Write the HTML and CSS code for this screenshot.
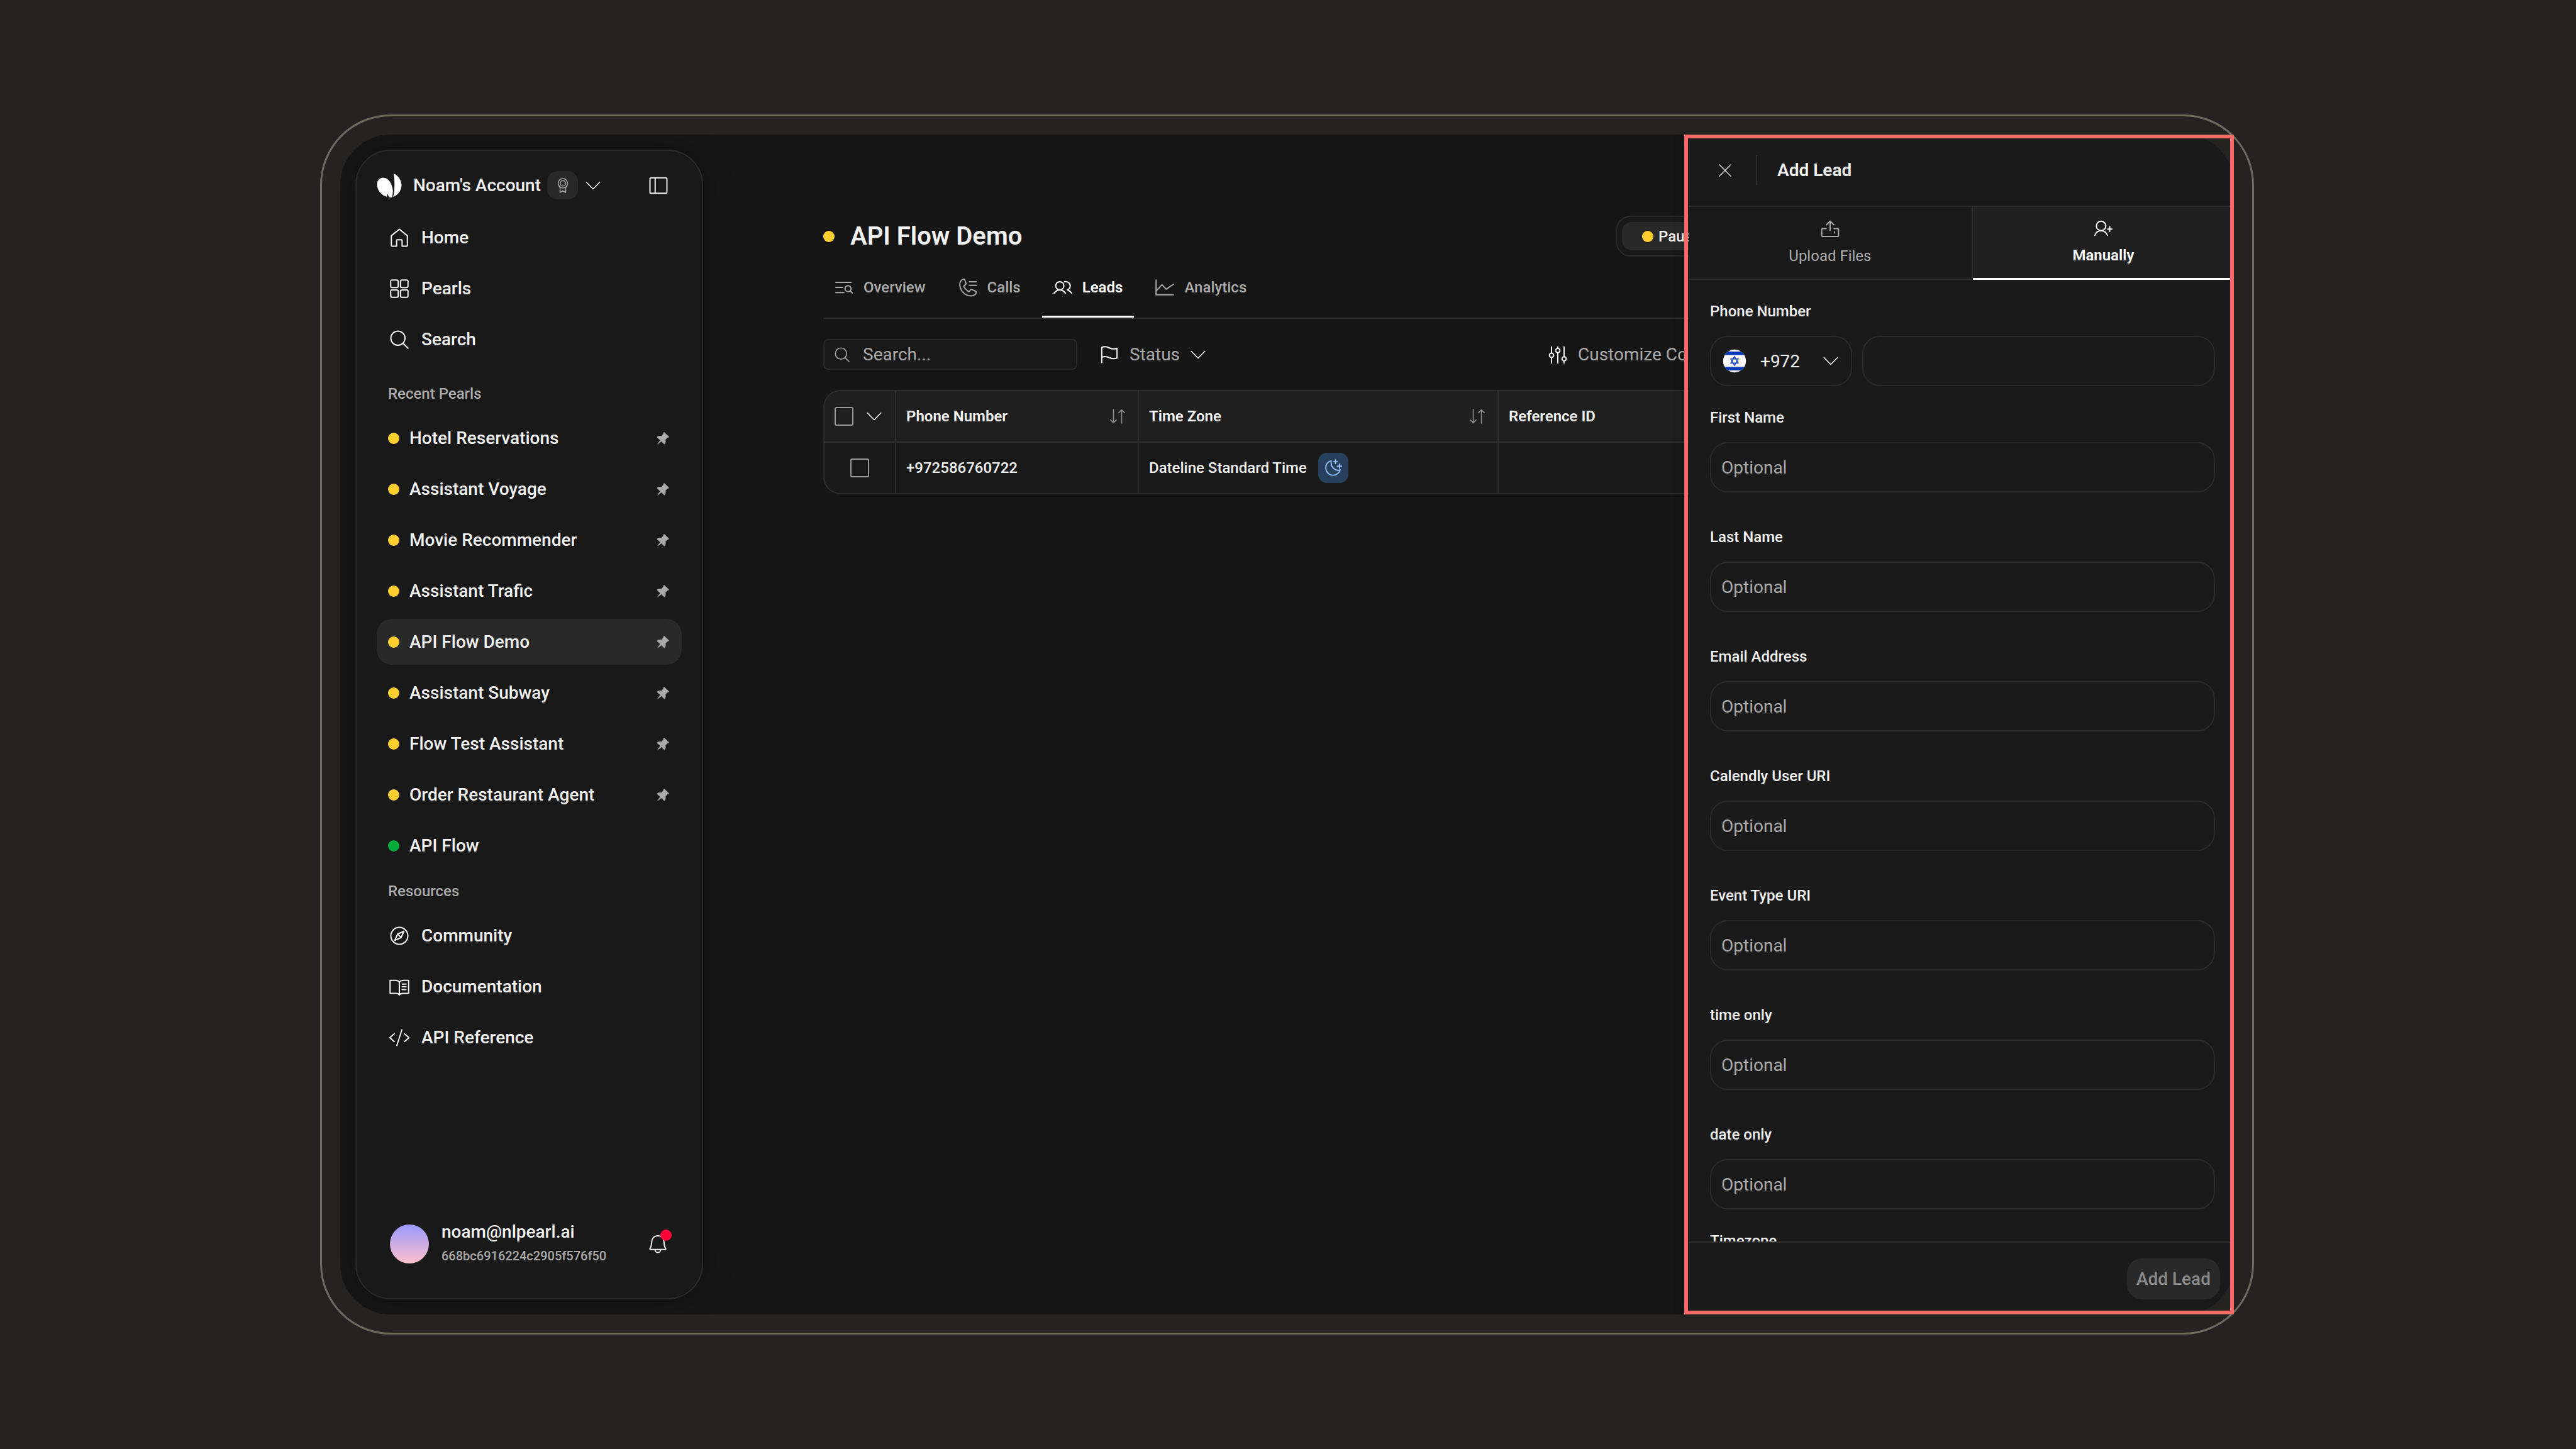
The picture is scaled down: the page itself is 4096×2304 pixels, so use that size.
FILE: index.html
```html
<!DOCTYPE html>
<html lang="en">
<head>
    <meta charset="UTF-8">
    <meta name="viewport" content="width=device-width, initial-scale=1.0">
    <title>API Flow Demo - Leads</title>
    <link rel="stylesheet" href="styles.css">
</head>
<body>

    <!-- Shared icons -->
    <svg class="sprite" aria-hidden="true">
        <symbol id="chevron" viewBox="0 0 24 24"><path d="M1.2 6.5 12 17.5 22.8 6.5"/></symbol>
        <symbol id="magnifier" viewBox="0 0 24 24"><circle cx="10.2" cy="10.2" r="9"/><path d="m16.6 16.6 6.4 6.4"/></symbol>
        <symbol id="pin" viewBox="0 0 20 20"><path d="M12.6.6 19.3 7c.6.7.4 1.5-.5 1.7l-1.6.4-3 3.2c.6 2.2.4 4.6-1 6.7-.4.5-1 .6-1.5.1L7.6 15l-5.5 4.3c-.6.4-1-.1-.6-.6L5.600 13 .9 8.800c-.5-.5-.4-1.200.2-1.600 2-1.200 4.200-1.400 6.400-.8L10.500 3l.4-1.900c.2-.9 1-1.200 1.700-.5z"/></symbol>
        <symbol id="sort" viewBox="0 0 24 24"><path d="M5.500 1v21M.9 17.600 5.500 22.400 10.100 17.600M18.500 23V2M13.900 6.400 18.500 1.600 23.100 6.400"/></symbol>
    </svg>

    <div class="frame">
        <div class="screen">

            <!-- Sidebar -->
            <aside class="sidebar">
                <div class="account">
                    <svg class="logo" viewBox="40 73 152 147"><path d="M80 99C108 99 134 130 138 180L134 216C128 219 119 219 113 217L106 196 101 214C72 208 42 178 42 140 42 115 58 99 80 99ZM142 74C170 85 190 115 190 145 190 175 170 205 140 215 149 175 150 120 142 74Z"/></svg>
                    <button class="account-switch">
                        <span>Noam's Account</span>
                        <span class="badge">
                            <svg class="icon icon-medal" viewBox="0 0 24 24"><circle cx="12" cy="8.500" r="7.500"/><circle cx="12" cy="8.500" r="4.300"/><path d="M7.500 15v8l4.500-2.500 4.500 2.500v-8"/></svg>
                        </span>
                        <svg class="icon icon-sm"><use href="#chevron"/></svg>
                    </button>
                    <button class="collapse" aria-label="Collapse sidebar">
                        <svg class="icon" viewBox="0 0 24 24"><rect x="1.200" y="2.200" width="21.600" height="19.600" rx="1.500"/><path d="M7.800 2.200v19.600"/></svg>
                    </button>
                </div>

                <nav class="nav">
                    <a class="nav-item" href="#home">
                        <svg class="icon" viewBox="0 0 24 24"><path d="M1.800 9.500 12 1.200l10.200 8.300v12.300a1 1 0 0 1-1 1h-5.700v-7.300a1 1 0 0 0-1-1h-5a1 1 0 0 0-1 1v7.300H2.800a1 1 0 0 1-1-1z"/></svg>
                        Home
                    </a>
                    <a class="nav-item" href="#pearls">
                        <svg class="icon" viewBox="0 0 24 24"><rect x="1" y="1" width="9.500" height="9.500" rx="1.800"/><rect x="13.500" y="1" width="9.500" height="9.500" rx="1.800"/><rect x="1" y="13.500" width="9.500" height="9.500" rx="1.800"/><rect x="13.500" y="13.500" width="9.500" height="9.500" rx="1.800"/></svg>
                        Pearls
                    </a>
                    <a class="nav-item" href="#search">
                        <svg class="icon"><use href="#magnifier"/></svg>
                        Search
                    </a>
                </nav>

                <h2 class="nav-title">Recent Pearls</h2>
                <nav class="nav">
                    <a class="pearl" href="#p1"><span class="dot"></span>Hotel Reservations<svg class="pin"><use href="#pin"/></svg></a>
                    <a class="pearl" href="#p2"><span class="dot"></span>Assistant Voyage<svg class="pin"><use href="#pin"/></svg></a>
                    <a class="pearl" href="#p3"><span class="dot"></span>Movie Recommender<svg class="pin"><use href="#pin"/></svg></a>
                    <a class="pearl" href="#p4"><span class="dot"></span>Assistant Trafic<svg class="pin"><use href="#pin"/></svg></a>
                    <a class="pearl active" href="#p5"><span class="dot"></span>API Flow Demo<svg class="pin"><use href="#pin"/></svg></a>
                    <a class="pearl" href="#p6"><span class="dot"></span>Assistant Subway<svg class="pin"><use href="#pin"/></svg></a>
                    <a class="pearl" href="#p7"><span class="dot"></span>Flow Test Assistant<svg class="pin"><use href="#pin"/></svg></a>
                    <a class="pearl" href="#p8"><span class="dot"></span>Order Restaurant Agent<svg class="pin"><use href="#pin"/></svg></a>
                    <a class="pearl" href="#p9"><span class="dot green"></span>API Flow</a>
                </nav>

                <h2 class="nav-title resources">Resources</h2>
                <nav class="nav">
                    <a class="nav-item" href="#community">
                        <svg class="icon" viewBox="0 0 24 24"><circle cx="12" cy="12" r="10.800"/><path d="M17.800 6.200 9.800 9.800 6.200 17.800 14.200 14.200z"/><path d="m9.800 9.800 4.400 4.400"/></svg>
                        Community
                    </a>
                    <a class="nav-item" href="#docs">
                        <svg class="icon icon-wide" viewBox="0 0 26 24"><path d="M13 6c-1.500-1.700-3-2.200-5-2.200H1.200v16.600H9c2 0 3.300.6 4 2.200.7-1.600 2-2.200 4-2.200h7.800V3.800H18c-2 0-3.500.5-5 2.200zM13 6v16.500M16.500 8.500h5M16.500 12h5M16.500 15.500h5"/></svg>
                        Documentation
                    </a>
                    <a class="nav-item" href="#api">
                        <svg class="icon icon-wide" viewBox="0 0 26 24"><path d="M6.500 7 .8 12l5.700 5M19.500 7l5.700 5-5.700 5M16.200 2 9.800 22"/></svg>
                        API Reference
                    </a>
                </nav>

                <div class="user">
                    <span class="avatar"></span>
                    <div class="user-text">
                        <div class="user-mail">noam@nlpearl.ai</div>
                        <div class="user-id">668bc6916224c2905f576f50</div>
                    </div>
                    <button class="bell" aria-label="Notifications">
                        <svg class="icon" viewBox="0 0 24 24"><path d="M12 1.500c-4.600 0-7.600 3.200-7.800 7.800-.2 4-.6 6.200-2.200 8.700-.3.5 0 1 .6 1h18.800c.6 0 .9-.5.6-1-1.600-2.500-2-4.700-2.200-8.700C19.600 4.700 16.600 1.500 12 1.500zM8.500 19.300c0 2 1.500 3.500 3.500 3.500s3.500-1.500 3.500-3.500"/></svg>
                        <span class="bell-dot"></span>
                    </button>
                </div>
            </aside>

            <!-- Leads page -->
            <main class="main">
                <div class="title-row">
                    <span class="dot"></span>
                    <h1>API Flow Demo</h1>
                    <div class="status-switch">
                        <button class="paused"><span class="dot"></span>Paused</button>
                    </div>
                </div>

                <nav class="tabs">
                    <a class="tab" href="#overview">
                        <svg class="icon" viewBox="0 0 24 24"><path d="M1.500 5.600h19.300M1.500 12h8.800M1.500 18.600H12M20 16.400l2.500 2.600"/><circle cx="17.100" cy="13.600" r="3.800"/></svg>
                        Overview
                    </a>
                    <a class="tab" href="#calls">
                        <svg class="icon" viewBox="0 0 24 24"><path d="M6.800 1.400C4 1.600 1.500 4.600 1.700 8.800 2.200 16 8 22.800 16 22.800c3.500 0 6.500-1.800 6.600-4.600 0-.7-.4-1.100-1-1.400l-4.600-2.100c-.8-.3-1.400-.1-1.800.5l-1.300 1.700c-.4.5-1 .5-1.600.1C10 15.300 8 13.200 7 11.300c-.3-.6-.2-1.100.3-1.500l1.900-1.500c.5-.5.6-1 .4-1.600L7.800 2c-.2-.5-.5-.6-1-.6zM13.800 4.800h8.800M13.800 9.400h8.800"/></svg>
                        Calls
                    </a>
                    <a class="tab active" href="#leads">
                        <svg class="icon" viewBox="0 0 24 24"><circle cx="8.100" cy="9.900" r="5.200"/><path d="M.8 19.300c2-2.400 4.400-4.100 7.300-4.100s5.300 1.700 7.300 4.100M14.200 4.800c3.800-.6 7.200 1.700 7.200 5.200 0 2-1.100 3.900-3.600 5.200 2.200.6 3.900 1.900 5.500 4.100"/></svg>
                        Leads
                    </a>
                    <a class="tab" href="#analytics">
                        <svg class="icon" viewBox="0 0 24 24"><path d="M1 2.500v18.800h22M1.200 16.500 8.500 8.500l5.300 5.800L23 8"/></svg>
                        Analytics
                    </a>
                </nav>

                <div class="toolbar">
                    <label class="search">
                        <svg class="icon icon-sm"><use href="#magnifier"/></svg>
                        <input type="text" placeholder="Search..." aria-label="Search leads">
                    </label>
                    <button class="tool">
                        <svg class="icon" viewBox="0 0 24 24"><path d="M2.300 22V2.800C5.500 1.400 8.500 1.500 12 3.400c3.300 1.700 6.300 1.700 9.700.4v12.400c-3.400 1.300-6.400 1.200-9.700-.4-3.500-1.800-6.500-1.900-9.700-.6"/></svg>
                        Status
                        <svg class="icon icon-sm"><use href="#chevron"/></svg>
                    </button>
                    <div class="toolbar-right">
                        <button class="tool">
                            <svg class="icon" viewBox="0 0 24 24"><path d="M4 2v8M4 15.500V22.500M12 2v2M12 9.500v13M20 2v12.500M20 20v2.500"/><circle cx="4" cy="12.700" r="2.700"/><circle cx="12" cy="6.700" r="2.700"/><circle cx="20" cy="17.200" r="2.700"/></svg>
                            Customize Columns
                        </button>
                    </div>
                </div>

                <div class="table-wrap">
                    <table>
                        <thead>
                            <tr>
                                <th class="col-check">
                                    <div class="cell">
                                        <input type="checkbox" aria-label="Select all">
                                        <svg class="icon icon-sm"><use href="#chevron"/></svg>
                                    </div>
                                </th>
                                <th class="col-phone"><div class="cell">Phone Number <svg class="icon icon-sm sort"><use href="#sort"/></svg></div></th>
                                <th class="col-zone"><div class="cell">Time Zone <svg class="icon icon-sm sort"><use href="#sort"/></svg></div></th>
                                <th><div class="cell">Reference ID</div></th>
                            </tr>
                        </thead>
                        <tbody>
                            <tr>
                                <td><div class="cell center"><input type="checkbox" aria-label="Select +972586760722"></div></td>
                                <td><div class="cell">+972586760722</div></td>
                                <td>
                                    <div class="cell">
                                        Dateline Standard Time
                                        <span class="night">
                                            <svg class="icon" viewBox="0 0 24 24"><path d="M9 2.200C4.700 3.400 1.800 7.200 1.800 11.800c0 5.600 4.400 10.200 9.900 10.200 4.700 0 8.500-3 9.600-7.300-5.600 2-13-2.300-12.300-12.500zM15 1v5M12.500 3.500h5M20.500 6.500v6M17.500 9.500h6"/></svg>
                                        </span>
                                    </div>
                                </td>
                                <td></td>
                            </tr>
                        </tbody>
                    </table>
                </div>
            </main>

            <!-- Add lead drawer -->
            <section class="drawer">
                <header class="drawer-head">
                    <button class="close" aria-label="Close">
                        <svg class="icon" viewBox="0 0 24 24"><path d="m1 1 22 22M23 1 1 23"/></svg>
                    </button>
                    <h2>Add Lead</h2>
                </header>

                <div class="modes">
                    <button class="mode mode-upload">
                        <svg class="icon" viewBox="0 0 24 24"><path d="M7 11.500H2.500a1.200 1.200 0 0 0-1.200 1.200v7.600a1.200 1.200 0 0 0 1.200 1.200h19a1.200 1.200 0 0 0 1.200-1.200v-7.600a1.200 1.200 0 0 0-1.200-1.200H17M12 14V2M7.200 6.800 12 2l4.800 4.800M17.500 15.500v1.500"/></svg>
                        Upload Files
                    </button>
                    <button class="mode mode-manual active">
                        <svg class="icon" viewBox="0 0 24 24"><circle cx="9.500" cy="9" r="6"/><path d="M1.500 21c1.300-3.500 4.300-6 8-6s6.700 2.500 8 6M20.500 10v6M17.800 13h5.700"/></svg>
                        Manually
                    </button>
                </div>

                <form class="fields" id="lead-form">
                    <div class="field phone">
                        <label for="phone">Phone Number</label>
                        <div class="phone-row">
                            <div class="country">
                                <svg class="flag" viewBox="0 0 48 48">
                                    <clipPath id="round"><circle cx="24" cy="24" r="23"/></clipPath>
                                    <g clip-path="url(#round)">
                                        <path fill="#fff" d="M0 0h48v48H0z"/>
                                        <path fill="#0038b8" d="M0 5h48v7H0zM0 36h48v7H0z"/>
                                        <path fill="none" stroke="#0038b8" stroke-width="1.800" d="M24 15l7.500 13h-15zM24 33l-7.500-13h15z"/>
                                    </g>
                                </svg>
                                <select aria-label="Country code"><option>+972</option></select>
                                <svg class="icon icon-sm"><use href="#chevron"/></svg>
                            </div>
                            <input type="text" id="phone">
                        </div>
                    </div>
                    <div class="field">
                        <label for="first">First Name</label>
                        <input type="text" id="first" placeholder="Optional">
                    </div>
                    <div class="field">
                        <label for="last">Last Name</label>
                        <input type="text" id="last" placeholder="Optional">
                    </div>
                    <div class="field">
                        <label for="email">Email Address</label>
                        <input type="text" id="email" placeholder="Optional">
                    </div>
                    <div class="field">
                        <label for="calendly">Calendly User URI</label>
                        <input type="text" id="calendly" placeholder="Optional">
                    </div>
                    <div class="field">
                        <label for="event">Event Type URI</label>
                        <input type="text" id="event" placeholder="Optional">
                    </div>
                    <div class="field">
                        <label for="time">time only</label>
                        <input type="text" id="time" placeholder="Optional">
                    </div>
                    <div class="field last">
                        <label for="date">date only</label>
                        <input type="text" id="date" placeholder="Optional">
                    </div>
                    <div class="field">
                        <label for="zone">Timezone</label>
                        <input type="text" id="zone">
                    </div>
                </form>

                <footer class="drawer-foot">
                    <button class="submit" form="lead-form" disabled>Add Lead</button>
                </footer>
            </section>
        </div>

        <!-- Marker around the drawer -->
        <div class="highlight"></div>
    </div>

</body>
</html>
```
FILE: styles.css
```css
/* Basic Reset */
* {
    margin: 0;
    padding: 0;
    box-sizing: border-box;
}

body {
    font-family: Roboto, 'Liberation Sans', sans-serif;
    font-size: 28px;
    font-weight: 500;
    background: #242321;
    color: #f2f2f2;
    height: 100vh;
    padding: 182px 512px 182px 509px;
    overflow: hidden;
}

button,
input,
select {
    font: inherit;
    color: inherit;
    background: none;
    border: none;
}

button {
    display: flex;
    align-items: center;
    cursor: pointer;
}

a {
    color: inherit;
    text-decoration: none;
}

/* Icons */
.sprite {
    position: absolute;
    width: 0;
    height: 0;
}

.icon {
    width: 30px;
    height: 30px;
    flex: none;
    fill: none;
    stroke: currentColor;
    stroke-width: 1.6;
    stroke-linecap: round;
    stroke-linejoin: round;
}

.icon-sm {
    width: 24px;
    height: 24px;
}

.dot {
    width: 18px;
    height: 18px;
    flex: none;
    border-radius: 50%;
    background: #ffcf30;
}

.dot.green {
    background: #00ad3c;
}

/* Device frame */
.frame {
    position: relative;
    height: 100%;
    border: 3px solid #6b6b60;
    border-radius: 112px;
    padding: 29px;
}

.screen {
    position: relative;
    display: flex;
    height: 100%;
    padding: 24px;
    border-radius: 80px;
    background: #161616;
    overflow: hidden;
}

.highlight {
    position: absolute;
    top: 29px;
    right: 29px;
    bottom: 29px;
    width: 874px;
    border: 6px solid #ff6868;
    pointer-events: none;
}

/* Sidebar */
.sidebar {
    display: flex;
    flex-direction: column;
    flex: none;
    width: 553px;
    padding: 32px 32px 48px;
    border: 2px solid #2b2b2b;
    border-radius: 56px;
    background: #191919;
    box-shadow: 0 0 48px rgba(0, 0, 0, 0.3);
}

.account {
    display: flex;
    align-items: center;
    height: 45px;
    margin-bottom: 24px;
}

.logo {
    width: 40px;
    height: 40px;
    margin-right: 18px;
    fill: #fff;
}

.account-switch .badge {
    display: flex;
    align-items: center;
    justify-content: center;
    width: 49px;
    height: 45px;
    margin: 0 12px 0 10px;
    border-radius: 16px;
    background: #292929;
    color: #aaa;
}

.icon-medal {
    width: 24px;
    height: 24px;
}

.collapse {
    margin-left: auto;
    padding-right: 22px;
}

.nav {
    display: flex;
    flex-direction: column;
    gap: 8px;
}

.nav-item,
.pearl {
    display: flex;
    align-items: center;
    height: 73px;
    padding: 0 20px 0 18px;
    border-radius: 24px;
}

.nav-item {
    gap: 20px;
    padding-left: 21px;
}

.icon-wide {
    width: 34px;
    margin: 0 -2px;
}

.pearl {
    gap: 16px;
}

.pearl.active {
    background: #292929;
}

.pin {
    width: 20px;
    height: 20px;
    margin-left: auto;
    fill: #aaa;
}

.nav-title {
    margin: 36px 0 20px 18px;
    font-size: 24px;
    font-weight: 500;
    line-height: 28px;
    color: #aaa;
}

.nav-title.resources {
    margin-top: 22px;
}

.user {
    display: flex;
    align-items: center;
    margin-top: auto;
    padding: 0 20px 0 21px;
}

.avatar {
    width: 62px;
    height: 62px;
    margin-right: 20px;
    border-radius: 50%;
    background: linear-gradient(#9a9aff, #ffc0cb);
}

.user-text {
    line-height: 38px;
}

.user-id {
    font-size: 20px;
    color: #aaa;
}

.bell {
    position: relative;
    margin-left: auto;
    padding: 3px;
}

.bell .icon {
    height: 32px;
}

.bell-dot {
    position: absolute;
    top: -4px;
    right: -4px;
    width: 18px;
    height: 18px;
    border-radius: 50%;
    background: #ff0338;
}

/* Leads page */
.main {
    flex: 1;
    min-width: 0;
    padding: 105px 167px 0 191px;
}

.title-row {
    display: flex;
    align-items: center;
    height: 65px;
}

.title-row h1 {
    margin-left: 25px;
    font-size: 40px;
    font-weight: 600;
}

.status-switch {
    display: flex;
    width: 792px;
    margin-left: auto;
    padding: 8px;
    border: 2px solid #2b2b2b;
    border-radius: 24px;
    background: #191919;
}

.paused {
    gap: 8px;
    height: 45px;
    padding: 0 32px;
    border-radius: 16px;
    background: #292929;
    font-size: 24px;
}

.tabs {
    display: flex;
    gap: 16px;
    border-bottom: 2px solid #2e2e2e;
}

.tab {
    display: flex;
    align-items: center;
    gap: 16px;
    height: 97px;
    padding: 3px 18px 0;
    border-bottom: 3px solid transparent;
    font-size: 24px;
    color: #aaa;
}

.tab.active {
    border-color: #fff;
    color: #fff;
    font-weight: 600;
}

.toolbar {
    display: flex;
    align-items: center;
    margin: 32px 0;
}

.search {
    display: flex;
    align-items: center;
    gap: 21px;
    width: 404px;
    height: 49px;
    margin-right: 36px;
    padding: 0 16px;
    border: 2px solid #2b2b2b;
    border-radius: 8px;
    background: #191919;
    color: #aaa;
}

.search input {
    width: 100%;
    font-weight: 400;
}

::placeholder {
    color: #aaa;
    opacity: 1;
}

.tool {
    gap: 17px;
    font-weight: 400;
    color: #aaa;
}

.tool .icon {
    color: #f2f2f2;
}

.toolbar-right {
    width: 899px;
    margin-left: auto;
}

.table-wrap {
    border: 2px solid #2e2e2e;
    border-radius: 28px;
    background: #191919;
    overflow: hidden;
}

table {
    width: 100%;
    table-layout: fixed;
    border-collapse: separate;
    border-spacing: 0;
    font-size: 24px;
}

th,
td {
    height: 80px;
    padding: 0 16px;
    border-right: 2px solid #2e2e2e;
    text-align: left;
}

th {
    height: 82px;
    border-bottom: 2px solid #2e2e2e;
    background: #1f1f1f;
    font-weight: 600;
}

th:last-child,
td:last-child {
    border-right: none;
}

.col-check {
    width: 114px;
}

.col-phone {
    width: 386px;
}

.col-zone {
    width: 572px;
}

.cell {
    display: flex;
    align-items: center;
    gap: 18px;
}

.cell.center {
    justify-content: center;
}

.sort {
    margin-left: auto;
    margin-right: 4px;
    color: #8c8c8c;
}

input[type="checkbox"] {
    appearance: none;
    width: 30px;
    height: 30px;
    border: 2px solid #999;
    border-radius: 3px;
}

.col-check .cell {
    gap: 21px;
}

.night {
    display: flex;
    align-items: center;
    justify-content: center;
    width: 48px;
    height: 48px;
    border-radius: 14px;
    background: #26405e;
    color: #9cc6ff;
}

.night .icon {
    width: 28px;
    height: 28px;
}

/* Add lead drawer */
.drawer {
    position: absolute;
    top: 0;
    right: 0;
    bottom: 0;
    display: flex;
    flex-direction: column;
    width: 867px;
    background: #1a1a1a;
    box-shadow: 0 0 24px rgba(0, 0, 0, 0.2);
}

.drawer-head {
    display: flex;
    align-items: center;
    height: 115px;
    padding-left: 48px;
    border-bottom: 2px solid #2e2e2e;
}

.close {
    height: 48px;
    padding-right: 39px;
    border-right: 2px solid #2b2b2b;
}

.close .icon {
    width: 20px;
    height: 20px;
}

.drawer-head h2 {
    margin-left: 32px;
    font-size: 28px;
    font-weight: 600;
}

.modes {
    display: flex;
    height: 116px;
}

.mode {
    flex-direction: column;
    justify-content: center;
    gap: 13px;
    padding-bottom: 2px;
    border-bottom: 2px solid #2e2e2e;
    font-size: 24px;
    font-weight: 400;
    line-height: 30px;
    color: #aaa;
}

.mode-upload {
    flex: 13;
    border-right: 2px solid #2e2e2e;
}

.mode-manual {
    flex: 12;
}

.mode.active {
    border-bottom: 3px solid #fff;
    background: #1f1f1f;
    font-weight: 600;
    color: #fff;
}

.fields {
    flex: 1;
    min-height: 0;
    padding: 35px 30px 0 34px;
    overflow: hidden;
}

.field {
    margin-bottom: 56px;
}

.field.phone {
    margin-bottom: 35px;
}

.field.last {
    margin-bottom: 35px;
}

.field label {
    display: block;
    margin-bottom: 24px;
    font-size: 24px;
    line-height: 30px;
}

.field input,
.country {
    width: 100%;
    height: 80px;
    padding: 0 16px;
    border: 2px solid #2b2b2b;
    border-radius: 28px;
    font-weight: 400;
}

.phone-row {
    display: flex;
    gap: 16px;
}

.country {
    display: flex;
    align-items: center;
    flex: none;
    width: 226px;
    padding: 0 20px 0 18px;
}

.flag {
    width: 38px;
    height: 38px;
    flex: none;
}

.country select {
    flex: 1;
    width: 0;
    margin-left: 22px;
    appearance: none;
}

.drawer-foot {
    display: flex;
    align-items: center;
    justify-content: flex-end;
    height: 116px;
    padding-right: 22px;
    border-top: 2px solid #2e2e2e;
}

.submit {
    height: 65px;
    padding: 0 15px;
    border-radius: 24px;
    background: #292929;
    color: #8c8c8c;
}
```
